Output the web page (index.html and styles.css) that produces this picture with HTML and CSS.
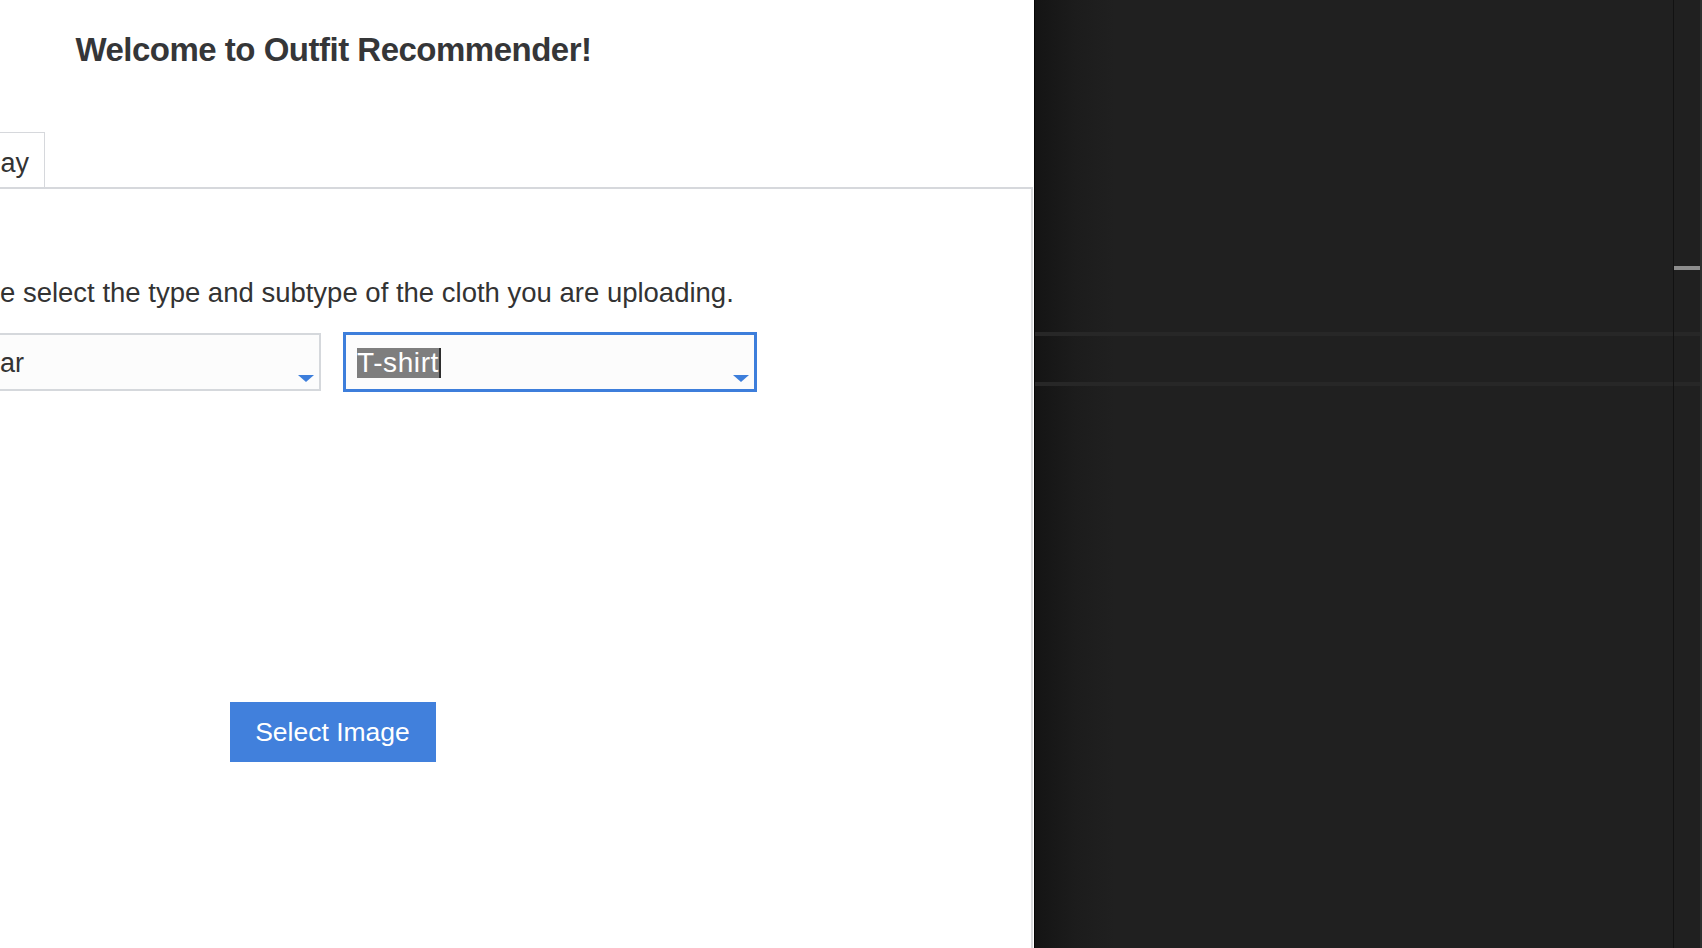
FILE: index.html
```html
<!DOCTYPE html>
<html lang="en">
<head>
<meta charset="utf-8">
<title>Outfit Recommender</title>
<link rel="stylesheet" href="styles.css">
</head>
<body>
<div class="window">
  <main class="app">
    <div class="canvas">
      <h1 class="title">Welcome to Outfit Recommender!</h1>
      <nav class="tabs">
        <div class="tab">Outfit of the Day</div>
      </nav>
      <section class="panel">
        <p class="hint">Please select the type and subtype of the cloth you are uploading.</p>
        <div class="selects">
          <div class="select">
            <span class="value">Topwear</span>
            <span class="arrow"></span>
          </div>
          <div class="select focused">
            <span class="value selected">T-shirt</span><span class="caret"></span>
            <span class="arrow"></span>
          </div>
        </div>
        <button class="btn" type="button">Select Image</button>
      </section>
    </div>
  </main>
  <aside class="side">
    <div class="side-main">
      <div class="band"></div>
      <div class="band band-2"></div>
    </div>
    <div class="rail">
      <div class="thumb"></div>
      <div class="band rail-band"></div>
      <div class="band band-2"></div>
    </div>
  </aside>
</div>
</body>
</html>
```
FILE: styles.css
```css
html, body {
  margin: 0;
  padding: 0;
  height: 100%;
}
body {
  font-family: "Liberation Sans", Arial, sans-serif;
  color: #333333;
  background: #ffffff;
  overflow: hidden;
}
.window {
  display: flex;
  height: 948px;
}
.app {
  width: 1034px;
  flex: none;
  overflow: hidden;
  background: #ffffff;
}
.canvas {
  width: 1399px;
  margin-left: -366px;
  height: 100%;
  display: flex;
  flex-direction: column;
  align-items: center;
}
.title {
  margin: 31px 0 0;
  font-size: 33px;
  letter-spacing: -0.5px;
  line-height: 37px;
  font-weight: bold;
  color: #353638;
}
.tabs {
  align-self: stretch;
  margin-top: 64px;
  display: flex;
  padding-left: 184px;
  border-bottom: 2px solid #d6d8dc;
}
.tab {
  border: 1px solid #d6d8dc;
  border-bottom: none;
  padding: 15px 15px 8px;
  font-size: 27px;
  line-height: 31px;
  color: #333333;
}
.panel {
  align-self: stretch;
  flex: 1;
  display: flex;
  flex-direction: column;
  align-items: center;
  border-right: 2px solid #dadbdd;
  background: #ffffff;
}
.hint {
  margin: 88px 0 0;
  font-size: 27.5px;
  line-height: 32px;
  color: #333333;
}
.selects {
  display: flex;
  gap: 23px;
  margin-top: 24px;
}
.select {
  box-sizing: border-box;
  width: 412px;
  height: 58px;
  border: 2px solid #d5d8dc;
  background: #fcfcfc;
  display: flex;
  align-items: flex-start;
  padding: 13px 5px 7px 11px;
  font-size: 27px;
  line-height: 30px;
}
.select.focused {
  border-color: #3d7edb;
  box-shadow: 0 0 0 1px #3d7edb;
}
.value {
  display: block;
  color: #333333;
}
.value.selected {
  font-size: 28px;
  letter-spacing: 0.6px;
  background: #7e7e7e;
  color: #ffffff;
}
.caret {
  display: block;
  width: 2px;
  height: 30px;
  background: #2e2e2e;
}
.arrow {
  margin-left: auto;
  align-self: flex-end;
  width: 0;
  height: 0;
  border-left: 8px solid transparent;
  border-right: 8px solid transparent;
  border-top: 7px solid #3d7edb;
}
.btn {
  margin-top: 311px;
  width: 206px;
  height: 60px;
  border: none;
  background: #4180dc;
  color: #ffffff;
  font-family: "Liberation Sans", Arial, sans-serif;
  font-size: 26.5px;
  padding: 0;
}
.side {
  flex: 1;
  display: flex;
  background: #202020;
  border-left: 1px solid #050505;
}
.side-main {
  flex: 1;
  display: flex;
  flex-direction: column;
  padding-top: 332px;
  background: linear-gradient(to right, #141414 0, #1c1c1c 40px, #202020 80px);
}
.band {
  height: 4px;
  background: #272727;
}
.band-2 {
  margin-top: 46px;
}
.rail {
  width: 26px;
  flex: none;
  display: flex;
  flex-direction: column;
  border-left: 1px solid #121212;
  border-right: 2px solid #2e2e2e;
}
.thumb {
  margin-top: 266px;
  height: 4px;
  background: #8d8d8d;
}
.rail-band {
  margin-top: 62px;
}
```
